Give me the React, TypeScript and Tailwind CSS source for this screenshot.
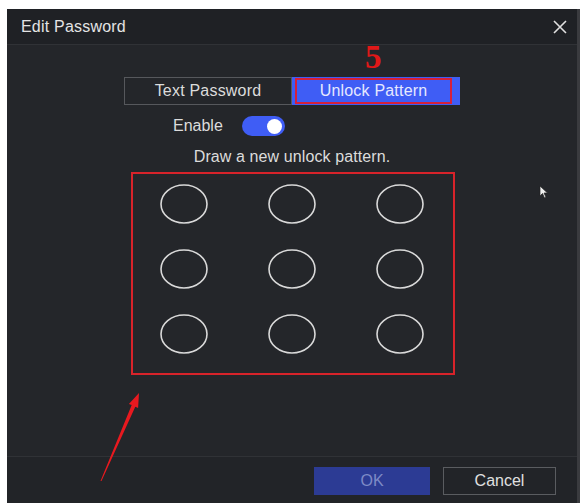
import React from "react";

const Circle = () => (
  <svg width="48" height="40" viewBox="0 0 48 40">
    <ellipse cx="24" cy="20" rx="23" ry="19" fill="none" stroke="#d9d9d9" strokeWidth="1.6" />
  </svg>
);

export default function App() {
  return (
    <div className="w-[586px] h-[503px] bg-white overflow-hidden relative" style={{ fontFamily: '"Liberation Sans", Arial, sans-serif' }}>
      <div className="ml-[7px] mt-[9px] w-[573px] h-[494px] flex flex-col bg-[#24262a] border-r-[3px] border-[#3a3b3f] relative">
        {/* Header */}
        <div className="h-[36px] shrink-0 flex items-center justify-between pl-[14px] pr-[10px] pt-[1px] bg-[#1f2125] border-b border-[#303236]">
          <span className="text-[16px] text-[#e4e4e4] tracking-[0.2px]">Edit Password</span>
          <svg width="14" height="14" viewBox="0 0 14 14">
            <path d="M1 1L13 13M13 1L1 13" stroke="#e0e0e0" strokeWidth="1.6" />
          </svg>
        </div>
        {/* Body */}
        <div className="flex-1 flex flex-col items-start pt-[32px]">
          <div className="flex h-[28px] ml-[117px]">
            <div className="w-[168px] flex items-center justify-center border border-[#56585c] text-[16px] text-[#dcdcdc] tracking-[0.2px]">
              Text Password
            </div>
            <div className="w-[168px] flex items-center justify-start pl-[3px] bg-[#3f5df5]">
              <div className="w-[157px] h-[26px] border-2 border-[#d6203a] flex items-center justify-center text-[16px] text-[#e6e8ff] tracking-[0.2px]">
                Unlock Pattern
              </div>
            </div>
          </div>
          <div className="flex items-center mt-[11px] h-[20px] ml-[166px]">
            <span className="text-[16px] text-[#dcdcdc]">Enable</span>
            <div className="ml-[19px] w-[43px] h-[20px] rounded-full bg-[#3f5df5] flex items-center justify-end pr-[3px]">
              <div className="w-[15px] h-[15px] rounded-full bg-white" />
            </div>
          </div>
          <div className="mt-[11px] h-[20px] w-full flex items-center justify-center text-[16px] text-[#dcdcdc] tracking-[0.1px]">
            Draw a new unlock pattern.
          </div>
          <div className="mt-[5px] ml-[124px] w-[324px] h-[203px] border-2 border-[#d8232a] pl-[27px] pt-[10px]">
            <div className="grid grid-cols-[48px_48px_48px] gap-x-[60px] gap-y-[25px]">
              <Circle /><Circle /><Circle />
              <Circle /><Circle /><Circle />
              <Circle /><Circle /><Circle />
            </div>
          </div>
        </div>
        {/* Footer */}
        <div className="h-[47px] shrink-0 border-t border-[#303236] bg-[#222428] flex justify-end items-start pt-[10px] pr-[21px] gap-[13px]">
          <div className="w-[116px] h-[28px] bg-[#2c3b94] flex items-center justify-center text-[16px] text-[#7d8ac6]">OK</div>
          <div className="w-[113px] h-[28px] border border-[#5a5c60] flex items-center justify-center text-[16px] text-[#e0e0e0]">Cancel</div>
        </div>
      </div>

      {/* Annotation: 5 */}
      <div className="absolute left-[365px] top-[41px] text-[33px] font-bold leading-none text-[#e01818]" style={{ fontFamily: '"Liberation Serif", "Times New Roman", serif' }}>
        5
      </div>

      {/* Annotation arrow */}
      <svg className="absolute left-0 top-0 pointer-events-none" width="586" height="503">
        <polygon points="100.5,481 131.7,405.1 128.9,403.9 139,393 138.1,407.9 135.3,406.7 101.5,481" fill="#e8191f" />
      </svg>

      {/* Mouse cursor */}
      <svg className="absolute left-[539px] top-[185px]" width="10" height="14" viewBox="0 0 10 14">
        <path d="M1 1L1 11L3.5 8.5L5.5 13L7 12.3L5 8L8.5 8Z" fill="#f0f0f0" stroke="#222" strokeWidth="0.7" />
      </svg>
    </div>
  );
}
